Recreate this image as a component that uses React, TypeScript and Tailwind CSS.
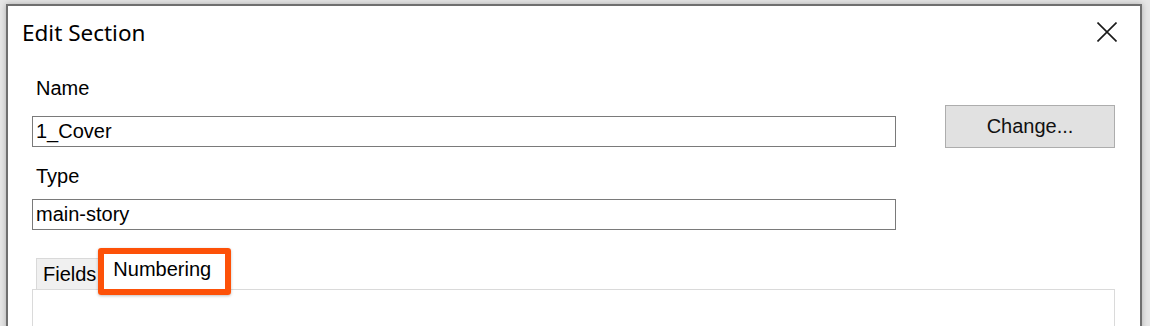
const sans = "font-['Liberation_Sans',Arial,sans-serif]";

function Field({ value }: { value: string }) {
  return (
    <div className="flex h-[31px] w-[864px] items-center border border-[#7a7a7a] bg-white pl-[3px]">
      <span className="text-[20px] leading-[23px] text-black">{value}</span>
    </div>
  );
}

function CloseIcon() {
  return (
    <svg width="20" height="20" viewBox="0 0 20 20" className="mt-[4px]">
      <path d="M0.5 0.5 L19.5 19.5 M19.5 0.5 L0.5 19.5" stroke="#1a1a1a" strokeWidth="1.6" fill="none" />
    </svg>
  );
}

export default function App() {
  return (
    <div className="h-[326px] w-[1150px] overflow-hidden bg-[#e6e6e6] pt-[4px]">
      <div
        className={`ml-[6px] h-[360px] w-[1136px] border-2 border-[#6f6f6f] bg-white shadow-[0_0_6px_rgba(0,0,0,0.25)] ${sans}`}
      >
        <div className="flex items-start justify-between pl-[14px] pr-[23px] pt-[12px]">
          <h1 className="font-['Noto_Sans',sans-serif] text-[22.5px] leading-[30px] text-black">
            Edit Section
          </h1>
          <CloseIcon />
        </div>

        <div className="pl-[24px]">
          <div className="mt-[29px] flex">
            <div className="w-[864px]">
              <div className="pl-[4px] text-[20px] leading-[23px] text-black">Name</div>
              <div className="mt-[16px]">
                <Field value="1_Cover" />
              </div>
              <div className="mt-[18px] pl-[4px] text-[20px] leading-[23px] text-black">Type</div>
              <div className="mt-[11px]">
                <Field value="main-story" />
              </div>
            </div>
            <button
              type="button"
              className="ml-[49px] mt-[28px] h-[43px] w-[170px] border border-[#adadad] bg-[#e1e1e1] text-[20px] leading-[23px] text-[#111]"
            >
              Change...
            </button>
          </div>

          <div className="mt-[23px] flex h-[36px] items-end pl-[4px]">
            <div className="h-[31px] border border-b-0 border-[#d9d9d9] bg-[#f0f0f0] pl-[6px] pr-[5px] pt-[4px] text-[20px] leading-[23px] text-black">
              Fields
            </div>
            <div className="relative z-10 -mb-px -ml-[2px] h-[37px] border border-b-0 border-[#d9d9d9] bg-white pl-[12px] pr-[16px] pt-[4px] text-[20px] leading-[23px] text-black">
              Numbering
              <div className="absolute -bottom-[5px] -left-[3px] -right-[4px] -top-[6px] rounded-[3px] border-[6px] border-[#fd5108] shadow-[0_1px_3px_rgba(0,0,0,0.25)]" />
            </div>
          </div>
          <div className="h-[80px] w-[1083px] border border-[#dadada] bg-white" />
        </div>
      </div>
    </div>
  );
}
